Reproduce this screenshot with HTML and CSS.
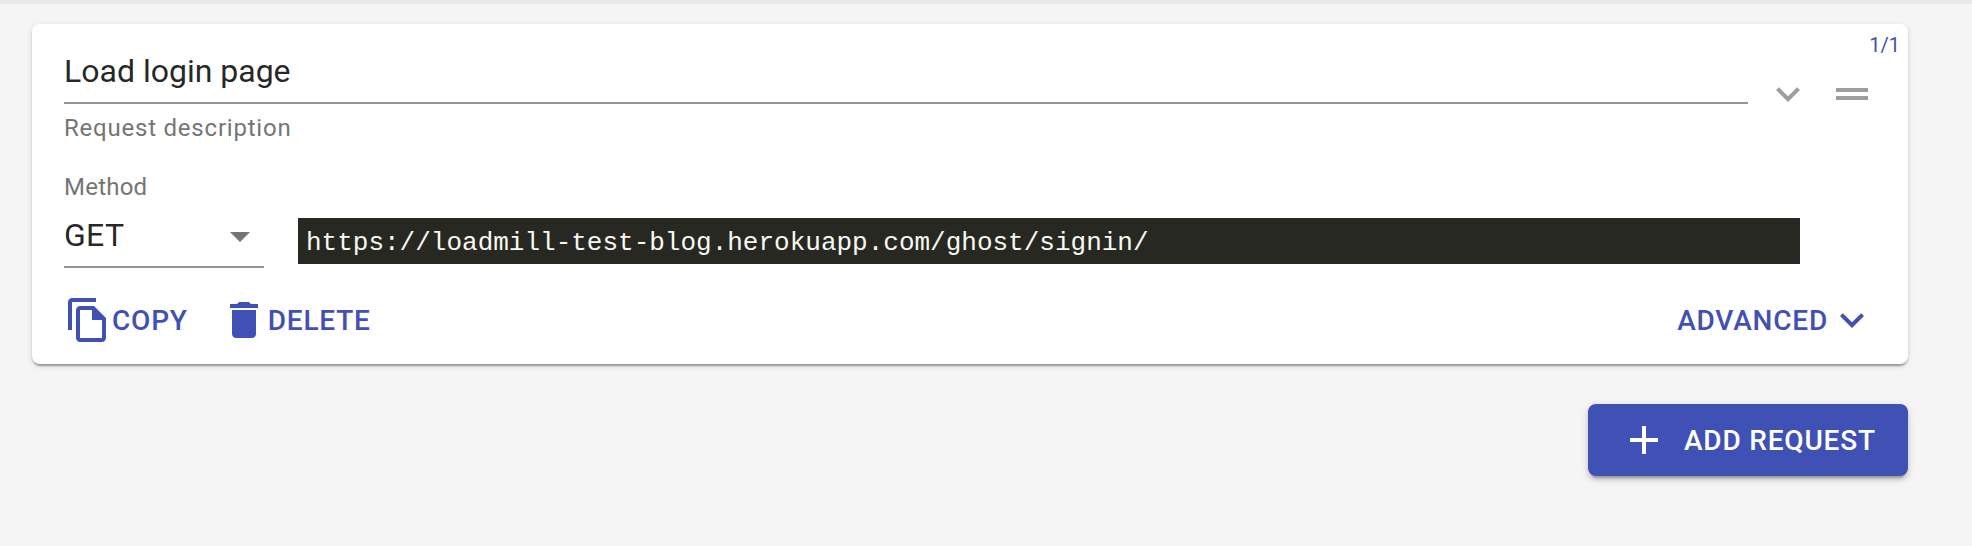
FILE: index.html
```html
<!DOCTYPE html>
<html lang="en">
<head>
<meta charset="utf-8">
<title>Requests</title>
<link rel="stylesheet" href="styles.css">
</head>
<body>
<main class="page">
  <section class="card">
    <span class="counter">1/1</span>
    <div class="header">
      <div class="description">
        <div class="title">Load login page</div>
        <div class="helper">Request description</div>
      </div>
      <svg class="icon muted" viewBox="0 0 24 24"><path d="M16.59 8.59L12 13.17 7.41 8.59 6 10l6 6 6-6z"/></svg>
      <svg class="icon muted" viewBox="0 0 24 24"><path d="M20 9H4v2h16V9zM4 15h16v-2H4v2z"/></svg>
    </div>
    <div class="request">
      <div class="method">
        <div class="label">Method</div>
        <div class="select"><span>GET</span><svg class="icon arrow" viewBox="0 0 24 24"><path d="M7 10l5 5 5-5z"/></svg></div>
      </div>
      <div class="url">https://loadmill-test-blog.herokuapp.com/ghost/signin/</div>
    </div>
    <div class="actions">
      <div class="action"><svg class="icon" viewBox="0 0 24 24"><path d="M16 1H4c-1.1 0-2 .9-2 2v14h2V3h12V1zm-1 4H8c-1.1 0-1.99.9-1.99 2L6 21c0 1.1.89 2 1.99 2H19c1.1 0 2-.9 2-2V11l-6-6zM8 21V7h6v5h5v9H8z"/></svg><span>COPY</span></div>
      <div class="action"><svg class="icon" viewBox="0 0 24 24"><path d="M6 19c0 1.1.9 2 2 2h8c1.1 0 2-.9 2-2V7H6v12zM19 4h-3.5l-1-1h-5l-1 1H5v2h14V4z"/></svg><span>DELETE</span></div>
      <div class="action advanced"><span>ADVANCED</span><svg class="icon" viewBox="0 0 24 24"><path d="M16.59 8.59L12 13.17 7.41 8.59 6 10l6 6 6-6z"/></svg></div>
    </div>
  </section>
  <div class="add"><svg class="icon" viewBox="0 0 24 24"><path d="M19 13h-6v6h-2v-6H5v-2h6V5h2v6h6v2z"/></svg><span>ADD REQUEST</span></div>
</main>
</body>
</html>
```

FILE: styles.css
```css
* { box-sizing: border-box; }

body {
  margin: 0;
  background: #f5f5f5;
  font-family: Roboto, sans-serif;
  color: rgba(0, 0, 0, 0.87);
}

.page {
  display: flex;
  flex-direction: column;
  align-items: flex-end;
  gap: 40px;
  height: 546px;
  padding: 20px 64px 0 32px;
  border-top: 4px solid #e9e9e9;
}

.card {
  position: relative;
  width: 100%;
  height: 340px;
  padding: 32px;
  border-radius: 8px;
  background: #fff;
  box-shadow: 0 4px 2px -2px rgba(0, 0, 0, 0.2), 0 2px 2px rgba(0, 0, 0, 0.14), 0 2px 6px rgba(0, 0, 0, 0.12);
}

.counter {
  position: absolute;
  top: 9px;
  right: 8px;
  font-size: 20px;
  line-height: 24px;
  letter-spacing: 0;
  color: #3f51b5;
}

.icon {
  flex: none;
  width: 48px;
  height: 48px;
  fill: currentColor;
}

.muted {
  margin: 14px 0 0 16px;
  color: #9e9e9e;
}

.header {
  display: flex;
  align-items: flex-start;
}

.description { width: 1684px; }

.title {
  padding-bottom: 16px;
  border-bottom: 2px solid #949494;
  font-size: 32px;
  line-height: 30px;
}

.helper {
  margin-top: 12px;
  font-size: 24px;
  line-height: 24px;
  letter-spacing: 0.78px;
  color: #757575;
}

.request {
  display: flex;
  align-items: flex-end;
  gap: 34px;
  margin-top: 35px;
}

.method { width: 200px; }

.label {
  font-size: 24px;
  line-height: 24px;
  letter-spacing: 0.225px;
  color: #757575;
}

.select {
  display: flex;
  align-items: flex-start;
  justify-content: space-between;
  height: 56px;
  margin-top: 13px;
  border-bottom: 2px solid #949494;
  font-size: 32px;
  line-height: 46px;
  letter-spacing: 0.3px;
}

.arrow { color: #757575; }

.url {
  width: 1502px;
  height: 46px;
  margin-bottom: 4px;
  padding-left: 8px;
  background: #272822;
  color: #f8f8f2;
  font-family: "Liberation Mono", monospace;
  font-size: 26px;
  line-height: 50px;
}

.actions {
  display: flex;
  gap: 32px;
  margin-top: 28px;
  color: #3f51b5;
}

.action,
.add {
  display: flex;
  align-items: center;
  font-size: 28px;
  font-weight: 500;
  line-height: 48px;
  letter-spacing: 0.8px;
}

.action span,
.add span { padding-top: 2px; }

.action { height: 48px; }

.advanced { margin-left: auto; }

.add {
  gap: 16px;
  width: 320px;
  height: 72px;
  padding: 0 32px;
  border-radius: 8px;
  background: #3f51b5;
  color: #fff;
  white-space: nowrap;
  box-shadow: 0 6px 2px -4px rgba(0, 0, 0, 0.2), 0 4px 4px rgba(0, 0, 0, 0.14), 0 2px 10px rgba(0, 0, 0, 0.12);
}
```
